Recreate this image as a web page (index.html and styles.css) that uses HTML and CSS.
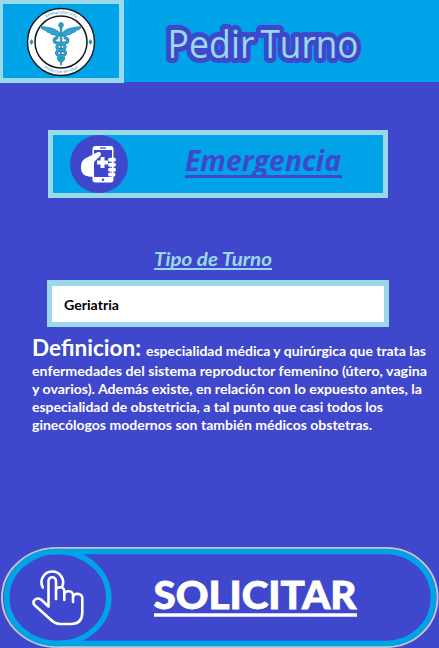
FILE: index.html
```html
<!DOCTYPE html>
<html lang="es">
<head>
<meta charset="utf-8">
<title>Pedir Turno</title>
<link rel="stylesheet" href="styles.css">
</head>
<body>
<header class="header">
  <div class="brand">
    <svg class="brand-logo" viewBox="0 0 70 70">
      <circle cx="35" cy="35" r="33.5" fill="#fff" stroke="#16181c" stroke-width="1.400"/>
      <circle cx="35" cy="35" r="26" fill="#fff" stroke="#16181c" stroke-width="1.500"/>
      <defs>
        <path id="arc-top" d="M6.500 35a28.500 28.500 0 0 1 57 0"/>
        <path id="arc-bottom" d="M4 35a31 31 0 0 0 62 0"/>
      </defs>
      <g class="brand-ring">
        <text><textPath href="#arc-top" startOffset="50%">Entidad plan vida</textPath></text>
        <text><textPath href="#arc-bottom" startOffset="50%">Proteccion en salud</textPath></text>
      </g>
      <path d="M3.500 35l2-3 2 3-2 3zM62.500 35l2-3 2 3-2 3z" fill="#129ad2"/>
      <g fill="#2ba4d3" stroke="#28708f" stroke-width=".5">
        <path d="M34 26c-4-4-8-6-20-6.500 2 3 3 3.500 6 4 0 1.500 2 2.500 4 2.500 1 2 3 2 5 2 1 2 3 2 5 1zM36 26c4-4 8-6 20-6.500-2 3-3 3.500-6 4 0 1.500-2 2.500-4 2.500-1 2-3 2-5 2-1 2-3 2-5 1z"/>
        <circle cx="35" cy="18" r="2.500"/>
        <path d="M34 20h2l-.4 38h-1.200z"/>
      </g>
      <g fill="none" stroke-linecap="round">
        <path d="M31 31c-4 0-4 5 1 5 9 1 9 6 3 7-6 1-6 5 0 6 4 1 3 4 0 5M39 31c4 0 4 5-1 5-9 1-9 6-3 7 6 1 6 5 0 6-4 1-3 4 0 5" stroke="#28708f" stroke-width="2.900"/>
        <path d="M31 31c-4 0-4 5 1 5 9 1 9 6 3 7-6 1-6 5 0 6 4 1 3 4 0 5M39 31c4 0 4 5-1 5-9 1-9 6-3 7 6 1 6 5 0 6-4 1-3 4 0 5" stroke="#2ba4d3" stroke-width="2"/>
      </g>
    </svg>
  </div>
  <svg class="title" viewBox="0 0 220 70">
    <text x="17.500" y="48" textLength="87" lengthAdjust="spacingAndGlyphs">Pedir</text>
    <text x="110.500" y="48" textLength="98" lengthAdjust="spacingAndGlyphs">Turno</text>
  </svg>
</header>
<main class="main">
  <div class="emergency">
    <svg class="phone" viewBox="0 0 58 58">
      <circle cx="29" cy="29" r="29" fill="#3f48cc"/>
      <rect x="22.500" y="11" width="21" height="36.500" rx="3" fill="#fff"/>
      <rect x="24" y="15" width="18" height="27" fill="#3f48cc"/>
      <path d="M30 13h6" stroke="#3f48cc" stroke-width="1.200"/>
      <circle cx="33" cy="44.800" r="1.200" fill="#3f48cc"/>
      <path d="M24 41.500c-8 1-13-2-13-9 0-6 2-8 6-10l10-5c3-1.500 5 1 3.500 3L24 27z" fill="#fff"/>
      <path d="M32.500 22v11M27 27.500h11" stroke="#fff" stroke-width="4"/>
      <path d="M40 24.700h4M40 29.800h4M40 34.700h4M40 39.500h3.500" stroke="#fff" stroke-width="4" stroke-linecap="round"/>
    </svg>
    <svg class="emergency-label" viewBox="0 0 160 50">
      <text x="0" y="31" textLength="156" lengthAdjust="spacingAndGlyphs">Emergencia</text>
      <path d="M0 36.500h157" stroke="#3f48cc" stroke-width="3"/>
    </svg>
  </div>
  <svg class="subtitle" viewBox="0 0 120 30">
    <text x="0" y="18" textLength="118" lengthAdjust="spacingAndGlyphs">Tipo de Turno</text>
    <path d="M0 21h118" stroke="#99d9ea" stroke-width="2"/>
  </svg>
  <div class="field">
    <svg class="field-value" viewBox="0 0 56 20"><text x="0" y="16" textLength="55" lengthAdjust="spacingAndGlyphs">Geriatria</text></svg>
  </div>
  <svg class="definition" viewBox="0 0 400 104">
    <text class="lead" x="0" y="22" textLength="109" lengthAdjust="spacingAndGlyphs">Definicion:</text>
    <text x="114" y="22" textLength="280" lengthAdjust="spacingAndGlyphs">especialidad médica y quirúrgica que trata las</text>
    <text x="0" y="42" textLength="395" lengthAdjust="spacingAndGlyphs">enfermedades del sistema reproductor femenino (útero, vagina</text>
    <text x="0" y="60" textLength="390" lengthAdjust="spacingAndGlyphs">y ovarios). Además existe, en relación con lo expuesto antes, la</text>
    <text x="0" y="78" textLength="351" lengthAdjust="spacingAndGlyphs">especialidad de obstetricia, a tal punto que casi todos los</text>
    <text x="0" y="96" textLength="340" lengthAdjust="spacingAndGlyphs">ginecólogos modernos son también médicos obstetras.</text>
  </svg>
</main>
<footer class="footer">
  <svg class="request" viewBox="0 0 439 102">
    <g fill="none">
      <path d="M57 2H386C415 2 437.500 24 437.500 51.500S415 101 386 101H57C27 101 2 79 2 51.500S27 2 57 2Z" stroke="#c8c4cf" stroke-width="2"/>
      <path d="M57 5.500H386C413 5.500 433.500 26 433.500 51.500S413 97.500 386 97.500H57C28 97.500 6.500 77 6.500 51.500S28 5.500 57 5.500Z" stroke="#00a2e8" stroke-width="5.500"/>
      <ellipse cx="57.800" cy="51.500" rx="51" ry="46" stroke="#00a2e8" stroke-width="5.500"/>
      <g class="hand">
        <path d="M42.800 41.500A10.800 10.800 0 1 1 62 41"/>
        <path d="M48.500 60.500V35c0-5 7.500-5 7.500 0v18V45c0-5 8.300-5 8.300 0v9-5c0-5 8.700-5 8.700 0v7-4c0-6 9.300-5 9.300 0v14c0 8-4 12-11 12H60c-4 0-7-2-10-5L35 59.500c-4-4 1-9 6-6z"/>
      </g>
    </g>
    <text class="request-label" x="153.500" y="63" textLength="203" lengthAdjust="spacingAndGlyphs">SOLICITAR</text>
    <path d="M154 69h203" stroke="#fff" stroke-width="3.600"/>
  </svg>
</footer>
</body>
</html>
```
FILE: styles.css
```css
* { box-sizing: border-box; }
body {
  margin: 0;
  width: 439px;
  height: 648px;
  display: flex;
  flex-direction: column;
  overflow: hidden;
  background: #3f48cc;
  font-family: "Lato", "Liberation Sans", sans-serif;
}
svg { display: block; overflow: visible; }
.header { display: flex; height: 82px; background: #00a2e8; }
.brand {
  width: 124px;
  height: 83px;
  border: 4px solid #99d9ea;
  border-width: 4px 5px 5px 3px;
  background: #00a2e8;
}
.brand-logo { width: 70px; height: 70px; margin: 3px 0 0 23px; }
.brand-ring { font-size: 4.200px; fill: #1799cf; text-anchor: middle; }
.title {
  width: 220px;
  height: 70px;
  margin: 10px 0 0 26px;
  font: 500 38px "Open Sans", sans-serif;
  fill: #99d9ea;
  stroke: #3f48cc;
  stroke-width: 10px;
  stroke-linejoin: round;
  paint-order: stroke;
}
.main { display: flex; flex-direction: column; padding-top: 48px; }
.emergency {
  display: flex;
  width: 340px;
  height: 68px;
  margin-left: 48px;
  border: 5px solid #99d9ea;
  background: #00a2e8;
}
.phone { width: 58px; height: 58px; margin-left: 17px; }
.emergency-label {
  width: 160px;
  height: 50px;
  margin: 5px 0 0 57px;
  font: italic 700 28px "Open Sans", sans-serif;
  fill: #3f48cc;
}
.subtitle {
  width: 120px;
  height: 30px;
  margin: 50px 0 0 154px;
  font-size: 19px;
  font-weight: 700;
  font-style: italic;
  fill: #99d9ea;
}
.field {
  display: flex;
  align-items: center;
  width: 342px;
  height: 47px;
  margin: 2px 0 0 47px;
  padding-left: 12px;
  border: 5px solid #99d9ea;
  border-top-width: 6px;
  background: #fff;
}
.field-value { width: 56px; height: 20px; font-size: 13.500px; font-weight: 700; }
.definition {
  width: 400px;
  height: 104px;
  margin: 7px 0 0 32px;
  font-size: 13.500px;
  font-weight: 700;
  fill: #fff;
}
.lead { font-size: 22px; }
.footer { margin-top: auto; }
.request { width: 439px; height: 102px; font-size: 38px; font-weight: 900; fill: #fff; }
.request-label { stroke: #fff; stroke-width: .8px; }
.hand { stroke: #fff; stroke-width: 2.600; stroke-linecap: round; stroke-linejoin: round; }
```
